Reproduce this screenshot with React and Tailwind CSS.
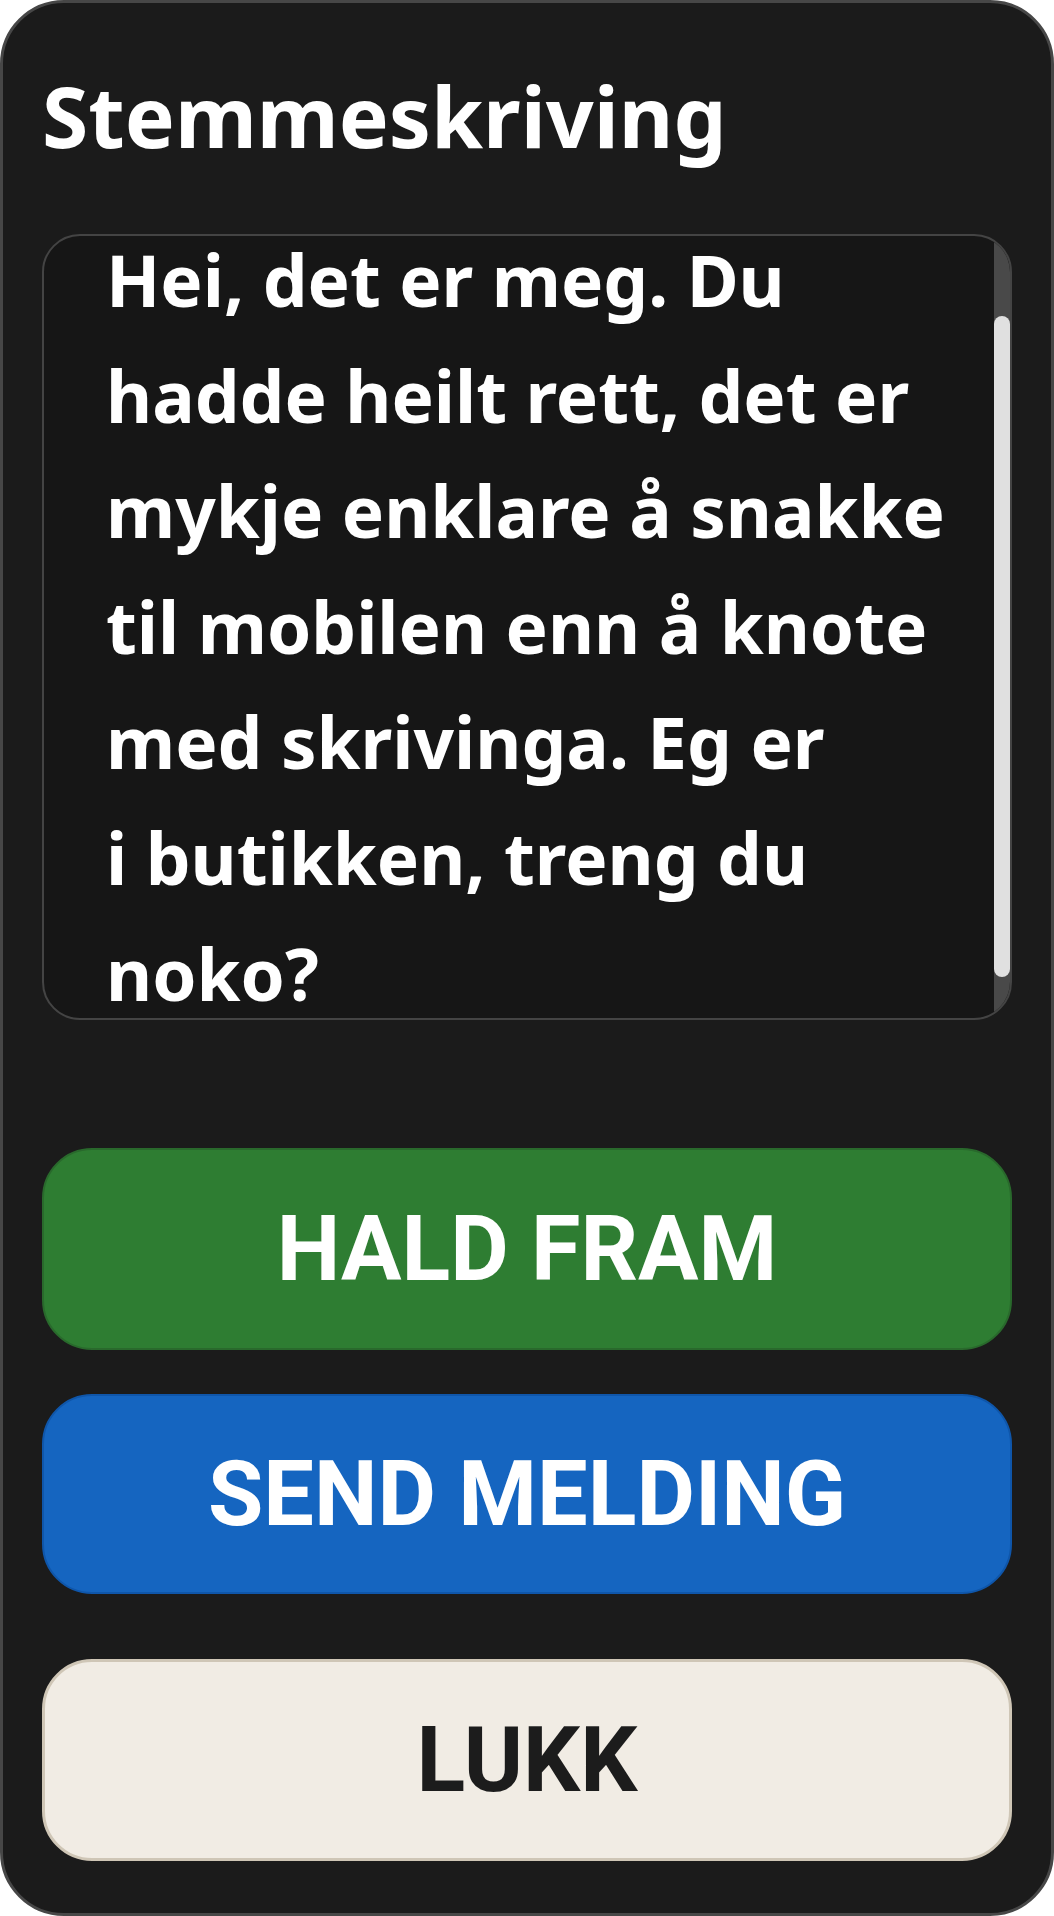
import { useEffect, useRef } from "react";

const transcript =
  "Hei, det er meg. Du hadde heilt rett, det er mykje enklare å snakke til mobilen enn å knote med skrivinga. Eg er i\u00a0butikken, treng du noko?";

export default function App() {
  const boxRef = useRef(null);

  useEffect(() => {
    // the transcript box is scrolled a little down, like in the live view
    if (boxRef.current) boxRef.current.scrollTop = 94;
  }, []);

  return (
    <div className="w-[1054px] h-[1916px] bg-white">
      <div className="h-full flex flex-col rounded-[64px] border-[3px] border-[#474747] bg-[#1b1b1b] px-[39px] pt-[65px] pb-[50px] font-['Noto_Sans',sans-serif]">
        <h1 className="text-[84px] leading-[96px] font-bold text-white">Stemmeskriving</h1>

        <div className="relative mt-[70px] h-[786px] shrink-0 overflow-hidden rounded-[38px] border-2 border-[#444444] bg-[#161616]">
          <div ref={boxRef} className="h-full overflow-y-auto pl-[62px] pr-14 pt-20 pb-9">
            <p className="text-[71px] leading-[115.6px] font-bold text-white">{transcript}</p>
          </div>
          {/* scrollbar */}
          <div className="absolute right-0 top-0 bottom-0 w-4 bg-[#494949]">
            <div className="mt-[80px] h-[661px] rounded-full bg-[#e0e0e0]" />
          </div>
        </div>

        <div className="mt-[128px] flex flex-col font-['Roboto',sans-serif]">
          <button className="h-[202px] rounded-[50px] border-2 border-[#29692c] bg-[#2e7d32] text-[90px] font-bold text-white flex items-center justify-center">
            HALD FRAM
          </button>
          <button className="mt-[44px] h-[200px] rounded-[50px] border-2 border-[#0f56aa] bg-[#1565c0] text-[90px] font-bold text-white flex items-center justify-center">
            SEND MELDING
          </button>
          <button className="mt-[65px] h-[202px] rounded-[50px] border-[3px] border-[#cfc6b6] bg-[#f1ece4] text-[90px] font-bold text-[#1c1c1c] flex items-center justify-center">
            LUKK
          </button>
        </div>
      </div>
    </div>
  );
}
